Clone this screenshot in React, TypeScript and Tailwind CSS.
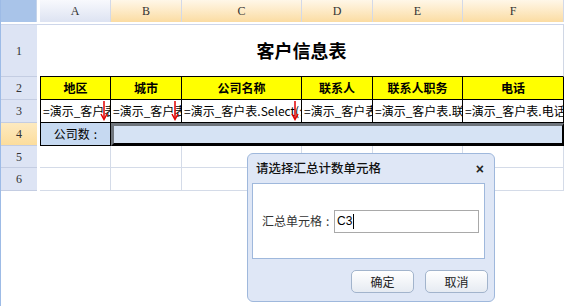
import React from 'react';

const cjk = { fontFamily: '"Noto Sans CJK SC", "Liberation Sans", sans-serif' };
const serif = { fontFamily: '"Liberation Serif", serif' };

const columns = [
  { key: 'A', selected: false },
  { key: 'B', selected: true },
  { key: 'C', selected: true },
  { key: 'D', selected: true },
  { key: 'E', selected: true },
  { key: 'F', selected: true },
];

const headers = ['地区', '城市', '公司名称', '联系人', '联系人职务', '电话'];
const formulas = [
  { text: '=演示_客户表.地区', arrow: true },
  { text: '=演示_客户表.城市', arrow: true },
  { text: '=演示_客户表.Select(公司名称)', arrow: true },
  { text: '=演示_客户表.联系人', arrow: false },
  { text: '=演示_客户表.联系人职务', arrow: false },
  { text: '=演示_客户表.电话', arrow: false },
];

function RedArrow() {
  return (
    <svg className="absolute right-[2px] top-[1px]" width="8" height="20" viewBox="0 0 8 20">
      <line x1="4" y1="0" x2="4" y2="18" stroke="#e00000" strokeWidth="1.5" />
      <polyline points="1,13 4,18.5 7,13" fill="none" stroke="#e00000" strokeWidth="1.5" />
    </svg>
  );
}

function RowHead({ n, active }: { n: number; active?: boolean }) {
  return (
    <div
      className={`flex items-center justify-center border-b border-[#c4cde2] text-[12px] text-[#333] ${
        active ? 'bg-gradient-to-b from-[#fdeac0] to-[#fcdd9c]' : 'bg-[#dde4f4]'
      }`}
      style={serif}
    >
      {n}
    </div>
  );
}

export default function App() {
  return (
    <div className="relative w-[567px] h-[306px] bg-white overflow-hidden" style={cjk}>
      <div className="border-l border-[#9dbbe6] w-[565px]">
        <div className="grid grid-cols-[36px_3px_71px_71px_120px_71px_90px_101px] grid-rows-[22px_3px_52px_23px_23px_23px_22px_23px]">
          {/* column header row */}
          <div className="bg-[#a9c4e9] border-r border-[#c4d3ea]" />
          <div className="bg-white" />
          {columns.map((c) => (
            <div
              key={c.key}
              className={`flex items-center justify-center border-r border-[#d3d9e8] text-[12px] text-[#333] ${
                c.selected
                  ? 'bg-gradient-to-b from-[#fff7e8] to-[#fbdca2]'
                  : 'bg-gradient-to-b from-[#f8f9fd] to-[#dde3f2]'
              }`}
              style={serif}
            >
              {c.key}
            </div>
          ))}

          {/* gap row */}
          <div className="col-span-8 bg-white border-b border-[#cdd6ea]" />

          {/* row 1 */}
          <RowHead n={1} />
          <div className="bg-white" />
          <div className="col-span-6 flex items-center justify-center border-r border-[#d0d7e5] border-b border-b-black text-[18px] font-bold text-black">
            客户信息表
          </div>

          {/* row 2 */}
          <RowHead n={2} />
          <div className="bg-white" />
          {headers.map((h, i) => (
            <div
              key={h}
              className={`flex items-center justify-center bg-[#ffff00] border-r border-b border-black text-[12px] font-bold text-black ${
                i === 0 ? 'border-l' : ''
              }`}
            >
              {h}
            </div>
          ))}

          {/* row 3 */}
          <RowHead n={3} />
          <div className="bg-white" />
          {formulas.map((f, i) => (
            <div
              key={i}
              className={`relative flex items-center overflow-hidden whitespace-nowrap bg-white border-r border-b border-black pl-[2px] text-[12px] text-black ${
                i === 0 ? 'border-l' : ''
              }`}
            >
              {f.text}
              {f.arrow && <RedArrow />}
            </div>
          ))}

          {/* row 4 */}
          <RowHead n={4} active />
          <div className="bg-white" />
          <div className="flex items-center justify-center bg-[#c6d9f1] border-l border-r border-b border-black text-[12px] text-black">
            公司数<span className="ml-[4px]">:</span>
          </div>
          <div className="col-span-5 bg-[#d6e3f4] border-t-[3px] border-l-[3px] border-t-[#6f757c] border-l-[#6f757c] border-r-2 border-b-[3px] border-r-black border-b-black" />

          {/* rows 5 and 6 */}
          {[5, 6].map((r) => (
            <React.Fragment key={r}>
              <RowHead n={r} />
              <div className="bg-white" />
              {columns.map((c) => (
                <div key={c.key} className="bg-white border-r border-b border-[#d4dbe8]" />
              ))}
            </React.Fragment>
          ))}
        </div>
        <div className="h-[115px]" />
      </div>

      {/* dialog */}
      <div className="absolute left-[247px] top-[153px] w-[248px] h-[149px] rounded-[6px] border border-[#9fb8dc] bg-[#dfe7f6] flex flex-col">
        <div className="h-[29px] flex items-center justify-between pl-[8px] pr-[10px]">
          <span className="text-[12.5px] font-medium text-[#111]">请选择汇总计数单元格</span>
          <span className="text-[14px] font-bold text-[#222] leading-none" style={{ fontFamily: '"Liberation Sans", sans-serif' }}>
            ×
          </span>
        </div>
        <div className="ml-[4px] w-[233px] h-[76px] bg-white border border-[#9fb8dc] flex items-center pl-[9px]">
          <span className="text-[12px] text-[#333] w-[72px]">
            汇总单元格<span className="ml-[4px]">:</span>
          </span>
          <div className="w-[145px] h-[23px] border border-[#a9a9a9] flex items-center pl-[2px]">
            <span className="text-[12px] text-black" style={{ fontFamily: '"Liberation Sans", sans-serif' }}>
              C3
            </span>
            <span className="ml-[1px] w-[1px] h-[15px] bg-black" />
          </div>
        </div>
        <div className="flex justify-end gap-[11px] pr-[6px] mt-[11px]">
          <button className="w-[63px] h-[23px] rounded-[5px] border border-[#a2b4cc] bg-gradient-to-b from-white to-[#e6ebf2] text-[12px] text-[#222]">
            确定
          </button>
          <button className="w-[63px] h-[23px] rounded-[5px] border border-[#a2b4cc] bg-gradient-to-b from-white to-[#e6ebf2] text-[12px] text-[#222]">
            取消
          </button>
        </div>
      </div>
    </div>
  );
}
